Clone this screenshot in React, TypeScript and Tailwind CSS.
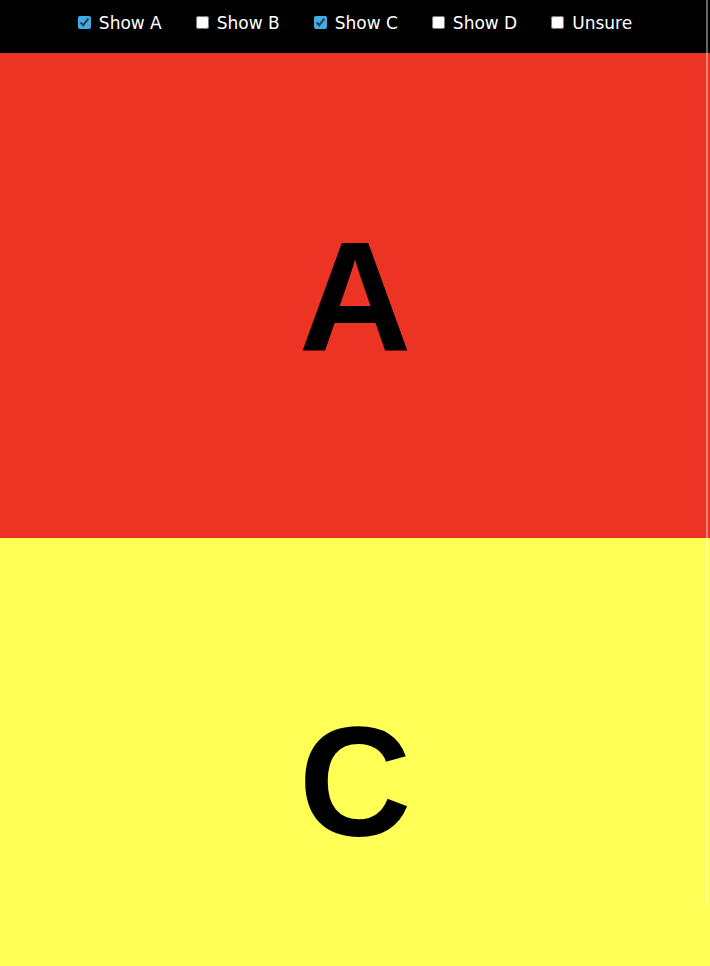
import React, { useState } from "react";

const items = [
  { key: "A", label: "Show A", def: true },
  { key: "B", label: "Show B", def: false },
  { key: "C", label: "Show C", def: true },
  { key: "D", label: "Show D", def: false },
  { key: "U", label: "Unsure", def: false },
];

export default function App() {
  const [state, setState] = useState<Record<string, boolean>>(
    Object.fromEntries(items.map((i) => [i.key, i.def]))
  );

  return (
    <div className="relative h-screen overflow-hidden">
      <div className="flex h-full flex-col overflow-hidden">
        <header
          className="flex h-[53px] shrink-0 items-start justify-center gap-[34px] bg-black pt-[13px] text-[17px] leading-[20px] text-white"
          style={{ fontFamily: '"DejaVu Sans", sans-serif' }}
        >
          {items.map((i) => (
            <label key={i.key} className="flex items-center gap-[8px]">
              <input
                type="checkbox"
                className="m-0 h-[13px] w-[13px] -translate-y-[1px] accent-[#3daee9]"
                checked={state[i.key]}
                onChange={() => setState((s) => ({ ...s, [i.key]: !s[i.key] }))}
              />
              <span>{i.label}</span>
            </label>
          ))}
        </header>
        {state.A && (
          <section
            className="flex h-[485px] shrink-0 items-center justify-center bg-[#ed3424] text-[156px] font-bold leading-none text-black"
            style={{ fontFamily: '"Liberation Sans", Arial, sans-serif' }}
          >
            A
          </section>
        )}
        {state.B && (
          <section
            className="flex h-[485px] shrink-0 items-center justify-center bg-[#3478ed] text-[156px] font-bold leading-none text-black"
            style={{ fontFamily: '"Liberation Sans", Arial, sans-serif' }}
          >
            B
          </section>
        )}
        {state.C && (
          <section
            className="flex h-[485px] shrink-0 items-center justify-center bg-[#ffff55] text-[156px] font-bold leading-none text-black"
            style={{ fontFamily: '"Liberation Sans", Arial, sans-serif' }}
          >
            C
          </section>
        )}
        {state.D && (
          <section
            className="flex h-[485px] shrink-0 items-center justify-center bg-[#55dd55] text-[156px] font-bold leading-none text-black"
            style={{ fontFamily: '"Liberation Sans", Arial, sans-serif' }}
          >
            D
          </section>
        )}
      </div>
      <div className="pointer-events-none absolute right-[2px] top-0 h-[905px] w-[2px] bg-white/40" />
    </div>
  );
}
